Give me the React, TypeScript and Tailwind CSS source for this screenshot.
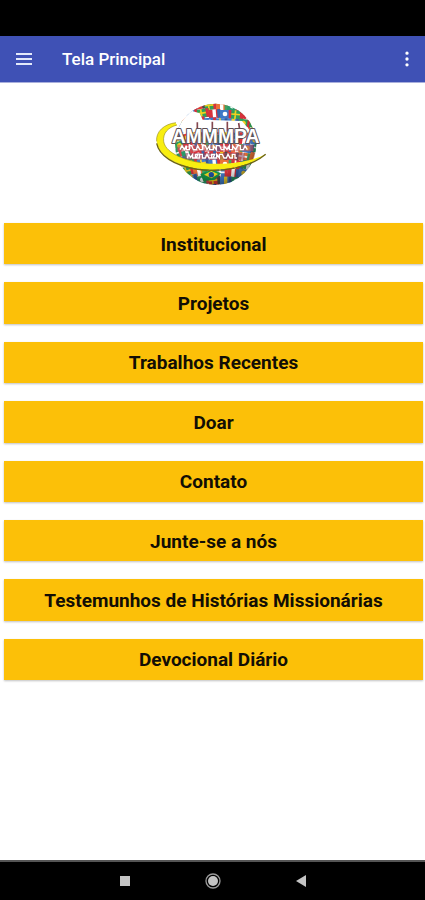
import { EllipsisVertical } from 'lucide-react';

const menuItems = [
  'Institucional',
  'Projetos',
  'Trabalhos Recentes',
  'Doar',
  'Contato',
  'Junte-se a nós',
  'Testemunhos de Histórias Missionárias',
  'Devocional Diário',
];

const flagColors = [
  ['#d8323c', '#ffffff', '#3765ab'],
  ['#31a058', '#f4d11f', '#d8323c'],
  ['#3f79c6', '#ffffff', '#d8323c'],
  ['#e03a32', '#f0c419', '#4b4b4b'],
  ['#2a9a68', '#ffffff', '#d8424a'],
  ['#4380cc', '#f2cf30', '#36589a'],
  ['#ea7238', '#ffffff', '#41a162'],
];

function Flags() {
  const flags = [];
  for (let row = 0; row < 11; row++) {
    for (let col = 0; col < 8; col++) {
      const colors = flagColors[(row * 3 + col * 5 + ((row * col) % 4)) % flagColors.length];
      const x = 58 + col * 35 + (row % 2) * 12;
      const y = 20 + row * 25;
      flags.push(
        <g key={`${row}-${col}`} transform={`rotate(${(col - 4) * 5} ${x} ${y})`}>
          <rect x={x} y={y} width="36" height="26" fill={colors[0]} />
          {(row + col) % 3 === 0 && <path d={`M${x} ${y + 12}h36M${x + 12} ${y}v26`} stroke={colors[1]} strokeWidth="5" />}
          {(row + col) % 3 === 1 && <rect x={x + 12} y={y} width="10" height="26" fill={colors[1]} />}
          {(row + col) % 3 === 2 && <circle cx={x + 15} cy={y + 12} r="7" fill={colors[1]} />}
          <rect x={x + 26} y={y} width="9" height="26" fill={colors[2]} />
        </g>
      );
    }
  }
  return <>{flags}</>;
}

function Logo() {
  return (
    <svg viewBox="0 0 375 285" className="h-[95px] w-[125px]" role="img" aria-label="AMMMPA">
      <defs>
        <clipPath id="globe">
          <circle cx="197" cy="148" r="122" />
        </clipPath>
        <radialGradient id="shade" cx="45%" cy="40%" r="60%">
          <stop offset="75%" stopColor="#000" stopOpacity="0" />
          <stop offset="100%" stopColor="#000" stopOpacity="0.35" />
        </radialGradient>
      </defs>
      <g clipPath="url(#globe)">
        <Flags />
        <path d="m151 237 36-14 26 12-18 19-35 4Z" fill="#159447" />
        <path d="m162 239 22-11 20 9-19 13Z" fill="#f5d622" />
        <circle cx="184" cy="239" r="8" fill="#1c4b9c" />
        <circle cx="197" cy="148" r="122" fill="url(#shade)" />
        <path d="M80 112 98 70 126 48 149 55 158 74 276 78 304 112Z" fill="#fff" />
        <path d="M142 82v28M187 80v30M232 80v30M266 84l4 26" stroke="#84474f" strokeWidth="5" />
      </g>

      {/* slogan band */}
      <path d="M82 159h228" stroke="#c0525a" strokeOpacity="0.6" strokeWidth="20" />
      <path d="M106 184h178" stroke="#8a4a62" strokeOpacity="0.6" strokeWidth="20" />
      <path
        d="m90 164 6-12 7 12 6-12v12h9v-12h7l5 12h9l4-12 6 12h9v-12h8l5 12 8-12v12h11v-12l9 12v-12h10l5 12h8v-12l9 12 7-12v12h10v-12l9 12 6-12h8v12h9l5-12 7 12"
        fill="none"
        stroke="#fff"
        strokeWidth="4"
      />
      <path
        d="m112 189 4-11 6 9 6-9v11h8v-11h8l-6 11h11v-11h8v11h9l5-11 6 11h8v-11h9l-5 11h11v-11l8 11v-11h9l5 11h7l5-11 6 11h7v-11h8v11h6"
        fill="none"
        stroke="#fff"
        strokeWidth="4"
      />

      <path
        d="M76 83C42 88 17 110 20 139c4 40 51 70 116 81 78 13 167-8 211-42-45 23-126 35-194 25-62-9-108-34-112-64-3-24 13-42 40-49Z"
        fill="#f8ee10"
      />
      <path d="M20 145c8 38 51 65 116 77 78 13 166-6 211-44" fill="none" stroke="#6c6412" strokeWidth="4" />
      <path d="M78 83C42 87 17 110 20 139M81 90C54 97 38 115 41 139c4 30 50 55 112 64" fill="none" stroke="#9b911e" strokeWidth="2" />

      <text
        x="197"
        y="143"
        textAnchor="middle"
        fontSize="58"
        fontWeight="700"
        fontFamily="'Liberation Sans', sans-serif"
        fill="#fff"
        stroke="#5c4f54"
        strokeWidth="6"
        strokeLinejoin="round"
        paintOrder="stroke"
      >
        AMMMPA
      </text>
    </svg>
  );
}

function AppBar() {
  return (
    <header className="flex h-[47px] items-center border-b border-[#a9afdc] bg-[#3f51b5] px-4 text-white">
      <button type="button" aria-label="Menu">
        <svg viewBox="0 0 16 12" className="h-3 w-4">
          <path d="M0 1h16M0 6h16M0 11h16" stroke="#e3e9fa" strokeWidth="2" />
        </svg>
      </button>
      <h1 className="ml-[30px] flex-1 pt-[2px] text-[17px] font-medium">Tela Principal</h1>
      <button type="button" aria-label="Mais opções" className="-mr-2">
        <EllipsisVertical className="h-5 w-5" strokeWidth={2} />
      </button>
    </header>
  );
}

function NavigationBar() {
  return (
    <footer className="flex h-10 items-center justify-center gap-[70px] border-t-2 border-[#555] bg-black text-[#c4c4c4]">
      <button type="button" aria-label="Recentes">
        <svg viewBox="0 0 18 18" className="h-[18px] w-[18px]">
          <rect x="4" y="4" width="10" height="10" fill="currentColor" />
        </svg>
      </button>
      <button type="button" aria-label="Início">
        <svg viewBox="0 0 18 18" className="h-[18px] w-[18px]">
          <circle cx="9" cy="9" r="7" fill="none" stroke="#9a9a9a" strokeWidth="1.3" />
          <circle cx="9" cy="9" r="5" fill="currentColor" />
        </svg>
      </button>
      <button type="button" aria-label="Voltar">
        <svg viewBox="0 0 18 18" className="h-[18px] w-[18px]">
          <path d="M14 3v12L4 9z" fill="currentColor" />
        </svg>
      </button>
    </footer>
  );
}

export default function App() {
  return (
    <div className="flex min-h-screen flex-col bg-white font-['Roboto',sans-serif]">
      <div className="h-9 bg-black" />
      <AppBar />
      <main className="flex flex-1 flex-col pt-3">
        <div className="flex justify-center">
          <Logo />
        </div>
        <nav className="mt-[33px] mr-[2px] ml-1 grid h-[457px] grid-rows-8 gap-[18px]">
          {menuItems.map((item) => (
            <button
              key={item}
              type="button"
              className="bg-[#fcc008] pt-[2px] text-[19px] leading-6 font-bold text-[#120e05] shadow-[0_1px_2px_rgba(0,0,0,0.25)]"
            >
              {item}
            </button>
          ))}
        </nav>
      </main>
      <NavigationBar />
    </div>
  );
}
